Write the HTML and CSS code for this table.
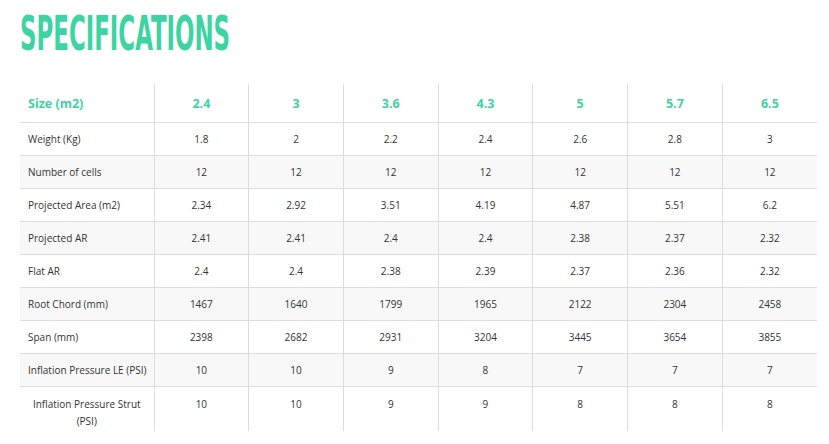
FILE: index.html
```html
<!DOCTYPE html>
<html>
<head>
<meta charset="utf-8">
<link rel="stylesheet" href="styles.css">
</head>
<body>
<div class="page">
  <h1 class="title"><span class="title-text">SPECIFICATIONS</span></h1>
  <table class="specs">
    <colgroup>
      <col class="c-label"><col><col><col><col><col><col><col>
    </colgroup>
    <thead>
      <tr class="head">
        <th class="label">Size (m2)</th><th>2.4</th><th>3</th><th>3.6</th><th>4.3</th><th>5</th><th>5.7</th><th>6.5</th>
      </tr>
    </thead>
    <tbody>
      <tr><td class="label">Weight (Kg)</td><td>1.8</td><td>2</td><td>2.2</td><td>2.4</td><td>2.6</td><td>2.8</td><td>3</td></tr>
      <tr class="alt"><td class="label">Number of cells</td><td>12</td><td>12</td><td>12</td><td>12</td><td>12</td><td>12</td><td>12</td></tr>
      <tr><td class="label">Projected Area (m2)</td><td>2.34</td><td>2.92</td><td>3.51</td><td>4.19</td><td>4.87</td><td>5.51</td><td>6.2</td></tr>
      <tr class="alt"><td class="label">Projected AR</td><td>2.41</td><td>2.41</td><td>2.4</td><td>2.4</td><td>2.38</td><td>2.37</td><td>2.32</td></tr>
      <tr><td class="label">Flat AR</td><td>2.4</td><td>2.4</td><td>2.38</td><td>2.39</td><td>2.37</td><td>2.36</td><td>2.32</td></tr>
      <tr class="alt"><td class="label">Root Chord (mm)</td><td>1467</td><td>1640</td><td>1799</td><td>1965</td><td>2122</td><td>2304</td><td>2458</td></tr>
      <tr><td class="label">Span (mm)</td><td>2398</td><td>2682</td><td>2931</td><td>3204</td><td>3445</td><td>3654</td><td>3855</td></tr>
      <tr class="alt"><td class="label">Inflation Pressure LE (PSI)</td><td>10</td><td>10</td><td>9</td><td>8</td><td>7</td><td>7</td><td>7</td></tr>
      <tr class="last"><td class="label center">Inflation Pressure Strut (PSI)</td><td>10</td><td>10</td><td>9</td><td>9</td><td>8</td><td>8</td><td>8</td></tr>
    </tbody>
  </table>
</div>
</body>
</html>
```
FILE: styles.css
```css
html, body {
  margin: 0;
  padding: 0;
  background: #ffffff;
}
.page {
  padding: 0 12px 0 20px;
  font-family: "Open Sans", "Liberation Sans", sans-serif;
  color: #333333;
}
.title {
  margin: 0;
  height: 84px;
  padding-top: 9px;
  box-sizing: border-box;
  font-family: "DejaVu Sans Condensed", "DejaVu Sans", sans-serif;
  font-weight: bold;
  font-size: 48px;
  line-height: 48px;
  color: #3dd3a3;
}
.title-text {
  display: inline-block;
  transform: scaleX(0.53);
  transform-origin: left center;
}
.specs {
  width: 797px;
  border-collapse: collapse;
  table-layout: fixed;
}
.c-label {
  width: 134px;
}
.specs th,
.specs td {
  text-align: center;
  vertical-align: middle;
  padding: 0 8px;
  border-left: 1px solid #dddddd;
  border-bottom: 1px solid #dddddd;
}
.specs th.label,
.specs td.label {
  border-left: none;
  text-align: left;
  padding: 0 2px 0 8px;
  white-space: nowrap;
}
.head th {
  height: 38px;
  font-family: "Open Sans", sans-serif;
  font-weight: 700;
  font-size: 12.5px;
  color: #3dd3a3;
}
.specs td {
  height: 32px;
  font-size: 10px;
}
.alt td {
  background: #f8f8f8;
}
.last td {
  border-bottom: none;
  height: 44px;
  box-sizing: border-box;
  vertical-align: top;
  padding-top: 9px;
  line-height: 17px;
}
.specs td.label.center {
  text-align: center;
  white-space: normal;
  padding: 9px 12px 0 12px;
}
```
